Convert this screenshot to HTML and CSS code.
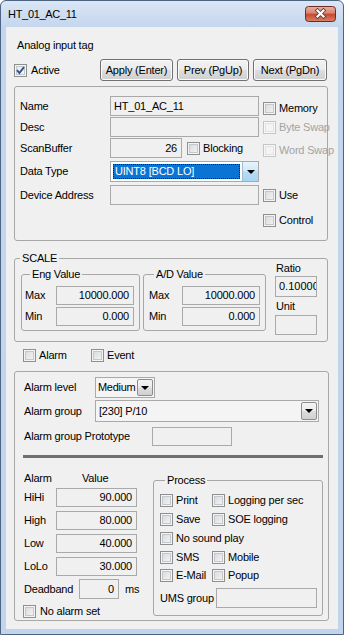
FILE: index.html
```html
<!DOCTYPE html>
<html>
<head>
<meta charset="utf-8">
<link rel="stylesheet" href="styles.css">
</head>
<body>
<div class="window">
  <div class="titlebar">
    <span class="title">HT_01_AC_11</span>
    <svg class="close" width="31" height="16" viewBox="0 0 31 16">
      <defs>
        <linearGradient id="cg" x1="0" y1="0" x2="0" y2="1">
          <stop offset="0" stop-color="#eab2a6"/>
          <stop offset="0.45" stop-color="#d9826f"/>
          <stop offset="0.5" stop-color="#c5472f"/>
          <stop offset="1" stop-color="#d88466"/>
        </linearGradient>
      </defs>
      <rect x="0.5" y="0.5" width="30" height="15" rx="3" fill="url(#cg)" stroke="#6e2b1f"/>
      <path d="M12.5 4.5 L18.5 10.5 M18.5 4.5 L12.5 10.5" stroke="#47403f" stroke-width="3.8" stroke-linecap="square"/>
      <path d="M12.5 4.5 L18.5 10.5 M18.5 4.5 L12.5 10.5" stroke="#ffffff" stroke-width="2.2" stroke-linecap="square"/>
    </svg>
  </div>
  <div class="client">
    <div class="caption">Analog input tag</div>
    <div class="toprow">
      <div class="chk"><span class="cb on"><svg width="9" height="9" viewBox="0 0 9 9"><path d="M1 4.2 L3.4 7 L8 1.2" fill="none" stroke="#2f4f91" stroke-width="1.9"/></svg></span><span>Active</span></div>
      <div class="btns">
        <span class="btn b-apply">Apply (Enter)</span>
        <span class="btn b-prev">Prev (PgUp)</span>
        <span class="btn b-next">Next (PgDn)</span>
      </div>
    </div>

    <div class="group g-main">
      <div class="frow r-name">
        <div class="left"><span class="lbl">Name</span><span class="tb w149">HT_01_AC_11</span></div>
        <div class="chk right mt4"><span class="cb"></span><span>Memory</span></div>
      </div>
      <div class="frow r-desc">
        <div class="left"><span class="lbl">Desc</span><span class="tb w149"></span></div>
        <div class="chk right dis"><span class="cb"></span><span>Byte Swap</span></div>
      </div>
      <div class="frow r-scan">
        <div class="left"><span class="lbl">ScanBuffer</span><span class="tb num w72">26</span><div class="chk blk"><span class="cb"></span><span>Blocking</span></div></div>
        <div class="chk right dis mt4"><span class="cb"></span><span>Word Swap</span></div>
      </div>
      <div class="frow r-dt">
        <div class="left"><span class="lbl">Data Type</span>
          <div class="combo dt"><span class="ctext"><span class="sel">UINT8 [BCD LO]</span></span><span class="dd dd-blue"><span class="tri"></span></span></div>
        </div>
      </div>
      <div class="frow r-da">
        <div class="left"><span class="lbl">Device Address</span><span class="tb w149"></span></div>
        <div class="chk right"><span class="cb"></span><span>Use</span></div>
      </div>
      <div class="frow r-ctl">
        <div class="left"></div>
        <div class="chk right"><span class="cb"></span><span>Control</span></div>
      </div>
    </div>

    <div class="group g-scale">
      <span class="glabel">SCALE</span>
      <div class="scalerow">
        <div class="group g-eng">
          <span class="glabel">Eng Value</span>
          <div class="vrow first"><span>Max</span><span class="tb num w78">10000.000</span></div>
          <div class="vrow"><span>Min</span><span class="tb num w78">0.000</span></div>
        </div>
        <div class="group g-ad">
          <span class="glabel">A/D Value</span>
          <div class="vrow first"><span>Max</span><span class="tb num w78">10000.000</span></div>
          <div class="vrow"><span>Min</span><span class="tb num w78">0.000</span></div>
        </div>
        <div class="ratiocol">
          <div class="rlabel">Ratio</div>
          <div class="tb ratio">0.10000</div>
          <div class="rlabel unit">Unit</div>
          <div class="tb unitbox"></div>
        </div>
      </div>
    </div>

    <div class="aerow">
      <div class="chk first"><span class="cb"></span><span>Alarm</span></div>
      <div class="chk"><span class="cb"></span><span>Event</span></div>
    </div>

    <div class="group g-alarm">
      <div class="arow r-level">
        <span class="alabel w71">Alarm level</span>
        <div class="combo level"><span class="ctext">Medium</span><span class="dd dd-gray"><span class="tri"></span></span></div>
      </div>
      <div class="arow r-group">
        <span class="alabel w71">Alarm group</span>
        <div class="combo agroup"><span class="ctext">[230] P/10</span><span class="dd dd-gray"><span class="tri"></span></span></div>
      </div>
      <div class="arow r-proto">
        <span class="alabel w128">Alarm group Prototype</span>
        <span class="tb w80"></span>
      </div>
      <div class="sep"></div>
      <div class="bottom">
        <div class="limits">
          <div class="lhead"><span class="h1">Alarm</span><span>Value</span></div>
          <div class="lrow first"><span class="ll">HiHi</span><span class="tb num w81">90.000</span></div>
          <div class="lrow"><span class="ll">High</span><span class="tb num w81">80.000</span></div>
          <div class="lrow"><span class="ll">Low</span><span class="tb num w81">40.000</span></div>
          <div class="lrow"><span class="ll">LoLo</span><span class="tb num w81">30.000</span></div>
          <div class="drow"><span class="dl">Deadband</span><span class="tb num w40">0</span><span class="ms">ms</span></div>
          <div class="chk noset"><span class="cb"></span><span>No alarm set</span></div>
        </div>
        <div class="group g-proc">
          <span class="glabel">Process</span>
          <div class="prow p1"><div class="chk c1"><span class="cb"></span><span>Print</span></div><div class="chk"><span class="cb"></span><span>Logging per sec</span></div></div>
          <div class="prow"><div class="chk c1"><span class="cb"></span><span>Save</span></div><div class="chk"><span class="cb"></span><span>SOE logging</span></div></div>
          <div class="prow"><div class="chk c1"><span class="cb"></span><span>No sound play</span></div></div>
          <div class="prow"><div class="chk c1"><span class="cb"></span><span>SMS</span></div><div class="chk"><span class="cb"></span><span>Mobile</span></div></div>
          <div class="prow p5"><div class="chk c1"><span class="cb"></span><span>E-Mail</span></div><div class="chk"><span class="cb"></span><span>Popup</span></div></div>
          <div class="urow"><span class="ul">UMS group</span><span class="tb w101"></span></div>
        </div>
      </div>
    </div>
  </div>
</div>
</body>
</html>
```
FILE: styles.css
```css
* { box-sizing: border-box; }
html, body { margin: 0; padding: 0; background: #ffffff; }
body {
  font-family: "Liberation Sans", Arial, sans-serif;
  font-size: 11px;
  line-height: 13px;
  letter-spacing: -0.2px;
  color: #000;
}

.window {
  width: 344px;
  height: 635px;
  border: 1px solid #4d6482;
  border-radius: 6px 6px 0 0;
  background: linear-gradient(#dae6f5, #c4d6ee 26px, #c2d4ec 100%);
  display: flex;
  flex-direction: column;
}
.titlebar {
  height: 26px;
  flex: none;
  display: flex;
  align-items: center;
  padding-left: 7px;
}
.title { flex: 1; font-size: 11px; letter-spacing: -0.3px; color: #000; }
.close { display: block; margin-right: 7px; }

.client {
  margin: 0 5px;
  height: 602px;
  background: #f0f0f0;
  display: flow-root;
}

.caption { margin: 12px 0 0 11px; }

/* checkboxes */
.chk { display: flex; align-items: center; gap: 3px; white-space: nowrap; height: 13px; }
.cb {
  width: 13px; height: 13px; flex: none;
  border: 1px solid #8e8f8f;
  background: linear-gradient(135deg, #d3d6da, #f8f8f8);
  box-shadow: inset 0 0 0 1px #f4f4f4, inset 0 0 0 2px #c4c7cb;
  display: flex; align-items: center; justify-content: center;
}
.cb.on { background: linear-gradient(135deg, #e4e6e9, #fbfbfb); }
.chk.dis { color: #a3a3a3; }
.chk.dis .cb {
  border-color: #c6c6c6;
  background: #f4f4f4;
  box-shadow: inset 0 0 0 1px #f7f7f7, inset 0 0 0 2px #e2e2e2;
}

/* buttons row */
.toprow {
  margin-top: 7px;
  height: 22px;
  display: flex;
  align-items: center;
  padding: 0 11px 0 8px;
}
.toprow .chk { gap: 4px; }
.btns { margin-left: auto; display: flex; gap: 4px; }
.btn {
  height: 22px;
  border: 1px solid #707070;
  border-radius: 3px;
  background: linear-gradient(#f2f2f2 0%, #ebebeb 48%, #dddddd 52%, #cfcfcf 100%);
  box-shadow: inset 0 0 0 1px #fbfbfb;
  display: flex; align-items: center; justify-content: center;
  white-space: nowrap;
}
.b-apply { width: 73px; }
.b-prev { width: 72px; }
.b-next { width: 74px; }

/* generic group */
.group {
  border: 1px solid #a7a7a7;
  border-radius: 3px;
}
.glabel {
  display: table;
  margin-top: -7px;
  margin-left: 5px;
  padding: 0 2px;
  background: #f0f0f0;
  line-height: 13px;
}

/* text boxes */
.tb {
  display: flex; align-items: center;
  height: 20px;
  border: 1px solid #a9a9a9;
  background: #f0f0f0;
  padding: 0 3px;
  white-space: nowrap;
  overflow: hidden;
  flex: none;
}
.tb.num { justify-content: flex-end; padding-right: 4px; }
.w149 { width: 149px; }
.w72 { width: 72px; }
.w78 { width: 78px; height: 19px; }
.w80 { width: 80px; height: 19px; }
.w81 { width: 81px; height: 19px; }
.w40 { width: 40px; }
.w101 { width: 101px; }

/* main group */
.g-main {
  margin: 5px 0 0 8px;
  width: 314px;
  height: 155px;
  padding: 9px 0 0 5px;
}
.frow { display: flex; align-items: center; height: 20px; }
.frow .left { width: 239px; height: 100%; display: flex; align-items: center; flex: none; }
.lbl { width: 90px; flex: none; white-space: nowrap; }
.right { margin-left: 4px; }
.mt4 { margin-top: 4px; }
.r-desc, .r-scan { margin-top: 1px; }
.r-dt { margin-top: 3px; height: 21px; }
.r-da { margin-top: 3px; }
.r-ctl { margin-top: 9px; height: 13px; }
.blk { margin-left: 5px; }

/* combos */
.combo {
  display: flex;
  border: 1px solid #a9a9a9;
  background: #f4f4f4;
  flex: none;
}
.combo .ctext { flex: 1; display: flex; align-items: center; padding-left: 3px; white-space: nowrap; overflow: hidden; }
.combo .dd {
  width: 16px; flex: none;
  display: flex; align-items: center; justify-content: center;
}
.tri { width: 0; height: 0; border-left: 4px solid transparent; border-right: 4px solid transparent; border-top: 4px solid #000; }
.dd-gray {
  border: 1px solid #8c8c8c;
  border-radius: 2px;
  background: linear-gradient(#f3f3f3 0%, #ebebeb 48%, #dddddd 52%, #d0d0d0 100%);
  margin: 1px;
}
.dd-blue {
  border-left: 1px solid #9dbbd6;
  background: linear-gradient(#e6f4fc 0%, #cfe9f9 48%, #b6dcf5 52%, #a8d5f3 100%);
}
.combo.dt { width: 149px; height: 21px; background: #ffffff; }
.combo.dt .ctext { padding: 2px; }
.sel {
  width: 100%; height: 100%;
  background: #0a74d4;
  color: #fff;
  border: 1px dotted #1d1d1d;
  display: flex; align-items: center;
  padding-left: 1px;
}

/* scale */
.g-scale {
  margin: 17px 0 0 8px;
  width: 314px;
  height: 84px;
}
.g-scale > .glabel { margin-left: 5px; }
.scalerow { display: flex; align-items: flex-start; padding-left: 6px; }
.g-eng { margin-top: 9px; width: 119px; height: 57px; padding: 0 5px 0 3px; }
.g-ad { margin: 9px 0 0 3px; width: 123px; height: 57px; padding: 0 5px 0 5px; }
.vrow { display: flex; align-items: center; justify-content: space-between; margin-top: 2px; }
.vrow.first { margin-top: 5px; }
.ratiocol { width: 42px; margin: -3px 0 0 9px; }
.rlabel { padding-left: 1px; }
.tb.ratio { height: 21px; margin-top: 1px; padding-left: 3px; letter-spacing: 0; }
.rlabel.unit { margin-top: 3px; }
.tb.unitbox { margin-top: 2px; }

/* alarm / event */
.aerow { margin-top: 7px; height: 13px; display: flex; align-items: center; padding-left: 17px; }
.aerow .chk.first { width: 68px; }

/* alarm group */
.g-alarm {
  margin: 9px 0 0 8px;
  width: 315px;
  height: 250px;
  padding: 5px 0 0 9px;
}
.arow { display: flex; align-items: center; height: 21px; }
.alabel { flex: none; white-space: nowrap; }
.w71 { width: 71px; }
.w128 { width: 128px; }
.r-group { margin-top: 2px; height: 22px; }
.r-proto { margin-top: 5px; height: 19px; }
.combo.level { width: 60px; height: 21px; }
.combo.level .ctext { padding-left: 2px; letter-spacing: -0.3px; }
.combo.agroup { width: 224px; height: 22px; }
.sep { margin: 9px 0 0 -1px; width: 300px; height: 3px; background: #6f6f6f; }

.bottom { display: flex; align-items: flex-start; }
.limits { width: 129px; flex: none; }
.lhead { display: flex; margin-top: 14px; height: 13px; }
.lhead .h1 { width: 58px; }
.lrow { display: flex; align-items: center; margin-top: 4px; }
.lrow.first { margin-top: 3px; }
.ll { width: 32px; }
.drow { display: flex; align-items: center; margin-top: 3px; }
.dl { width: 55px; }
.ms { margin-left: 6px; }
.noset { margin: 6px 0 0 -1px; gap: 4px; }

.g-proc {
  margin-top: 22px;
  width: 170px;
  height: 136px;
  padding-left: 6px;
}
.g-proc > .glabel { margin-left: 5px; }
.prow { display: flex; height: 13px; margin-top: 6px; }
.prow.p1 { margin-top: 7px; }
.prow.p5 { margin-top: 5px; }
.prow .c1 { width: 52px; flex: none; }
.urow { display: flex; align-items: center; margin-top: 6px; height: 20px; }
.ul { width: 56px; flex: none; }
```
